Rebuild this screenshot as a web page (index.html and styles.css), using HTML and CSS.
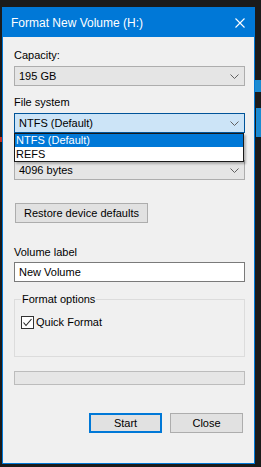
FILE: index.html
```
<!doctype html>
<html>
<head>
<meta charset="utf-8">
<title>Format New Volume (H:)</title>
<link rel="stylesheet" href="styles.css">
</head>
<body>
<div class="desk">
	<div class="strip strip-blue1"></div>
	<div class="strip strip-blue2"></div>
	<div class="strip strip-red"></div>

	<div class="window">
		<div class="titlebar">
			<span class="title">Format New Volume (H:)</span>
			<svg class="close" width="10" height="10" viewBox="0 0 10 10"><path d="M0.5 0.5 L9.5 9.5 M9.5 0.5 L0.5 9.5" stroke="#fff" stroke-width="1.1" fill="none"/></svg>
		</div>

		<div class="content">
			<div class="label first">Capacity:</div>
			<div class="combo">
				<span>195 GB</span>
				<svg class="chev" width="9" height="5" viewBox="0 0 9 5"><path d="M0.5 0.5 L4.5 4.5 L8.5 0.5" stroke="#606060" fill="none"/></svg>
			</div>

			<div class="label">File system</div>
			<div class="combo-wrap">
				<div class="combo focus">
					<span>NTFS (Default)</span>
					<svg class="chev" width="9" height="5" viewBox="0 0 9 5"><path d="M0.5 0.5 L4.5 4.5 L8.5 0.5" stroke="#606060" fill="none"/></svg>
				</div>
				<ul class="droplist">
					<li class="sel">NTFS (Default)</li>
					<li>REFS</li>
				</ul>
			</div>

			<!-- label covered by the open list -->
			<div class="label label-gap"></div>
			<div class="combo">
				<span>4096 bytes</span>
				<svg class="chev" width="9" height="5" viewBox="0 0 9 5"><path d="M0.5 0.5 L4.5 4.5 L8.5 0.5" stroke="#606060" fill="none"/></svg>
			</div>

			<div class="btn restore">Restore device defaults</div>

			<div class="label vol">Volume label</div>
			<div class="textbox">New Volume</div>

			<fieldset class="group">
				<legend>Format options</legend>
				<div class="check">
					<span class="box"><svg width="11" height="11" viewBox="0 0 11 11"><path d="M1.5 5.5 L4 8.5 L9.5 2" stroke="#222" stroke-width="1.1" fill="none"/></svg></span>
					<span>Quick Format</span>
				</div>
			</fieldset>

			<div class="progress"></div>

			<div class="actions">
				<div class="btn primary">Start</div>
				<div class="btn">Close</div>
			</div>
		</div>
	</div>
</div>
</body>
</html>
```

FILE: styles.css
```
body
{
	margin:0px;
	padding:0px;
	background:#1b1b1b;
	font-family:"Liberation Sans", Arial, sans-serif;
	font-size:11px;
	color:#000;
}
.desk
{
	position:relative;
	width:261px;
	height:467px;
	padding:7px 0 0 2px;
	box-sizing:border-box;
}
.strip
{
	position:absolute;
}
.strip-blue1
{
	left:255px;
	top:80px;
	width:6px;
	height:12px;
	background:#1c8ad0;
}
.strip-blue2
{
	left:256px;
	top:108px;
	width:5px;
	height:29px;
	background:#1c8ad0;
}
.strip-red
{
	left:0px;
	top:137px;
	width:2px;
	height:5px;
	background:#c42b1c;
}
.window
{
	width:253px;
	height:457px;
	box-sizing:border-box;
	border:1px #0078d7 solid;
	background:#f0f0f0;
}
.titlebar
{
	height:29px;
	background:#0078d7;
	display:flex;
	align-items:center;
	justify-content:space-between;
	padding:0 9px 0 8px;
	color:#fff;
	font-size:12px;
}
.title
{
	margin-top:1px;
}
.close
{
	display:block;
	margin-top:1px;
}
.content
{
	padding:0 9px 0 11px;
}
.label
{
	line-height:16px;
	margin-top:8px;
	margin-bottom:3px;
}
.label-gap
{
	height:16px;
}
.label.first
{
	margin-top:10px;
}
.label.vol
{
	margin-top:21px;
	margin-bottom:2px;
}
.combo
{
	height:20px;
	box-sizing:border-box;
	border:1px #adadad solid;
	background:#e5e5e5;
	display:flex;
	align-items:center;
	justify-content:space-between;
	padding:0 5px 0 4px;
}
.combo.focus
{
	border-color:#005499;
	background:#cce4f7;
}
.chev
{
	display:block;
}
.combo-wrap
{
	position:relative;
}
.droplist
{
	position:absolute;
	left:0px;
	top:20px;
	width:230px;
	margin:0;
	padding:0;
	list-style:none;
	box-sizing:border-box;
	border:1px #1a1a1a solid;
	background:#fff;
	box-shadow:2px 2px 2px rgba(0,0,0,0.25);
	z-index:2;
}
.droplist li
{
	height:13px;
	line-height:13px;
	padding-left:1px;
}
.droplist li + li
{
	height:14px;
	line-height:14px;
}
.droplist .sel
{
	background:#0078d7;
	color:#fff;
}
.btn
{
	height:20px;
	box-sizing:border-box;
	border:1px #adadad solid;
	background:#e1e1e1;
	display:flex;
	align-items:center;
	justify-content:center;
}
.restore
{
	width:133px;
	margin:23px 0 0 1px;
}
.textbox
{
	height:20px;
	box-sizing:border-box;
	border:1px #7a7a7a solid;
	background:#fff;
	display:flex;
	align-items:center;
	padding-left:4px;
}
.group
{
	margin:9px 0 0 0;
	padding:0 6px 26px 6px;
	border:1px #dcdcdc solid;
	min-width:0;
}
.group legend
{
	padding:0 1px;
	line-height:16px;
}
.check
{
	display:flex;
	align-items:center;
	gap:2px;
	margin-top:7px;
	line-height:16px;
}
.box
{
	width:13px;
	height:13px;
	box-sizing:border-box;
	border:1px #333 solid;
	background:#fff;
	display:flex;
	align-items:center;
	justify-content:center;
}
.box svg
{
	display:block;
}
.progress
{
	height:14px;
	box-sizing:border-box;
	margin-top:14px;
	border:1px #bcbcbc solid;
	background:#e6e6e6;
}
.actions
{
	display:flex;
	justify-content:flex-end;
	gap:8px;
	margin:28px 2px 0 0;
}
.actions .btn
{
	width:73px;
}
.actions .primary
{
	border:2px #0078d7 solid;
}
```
